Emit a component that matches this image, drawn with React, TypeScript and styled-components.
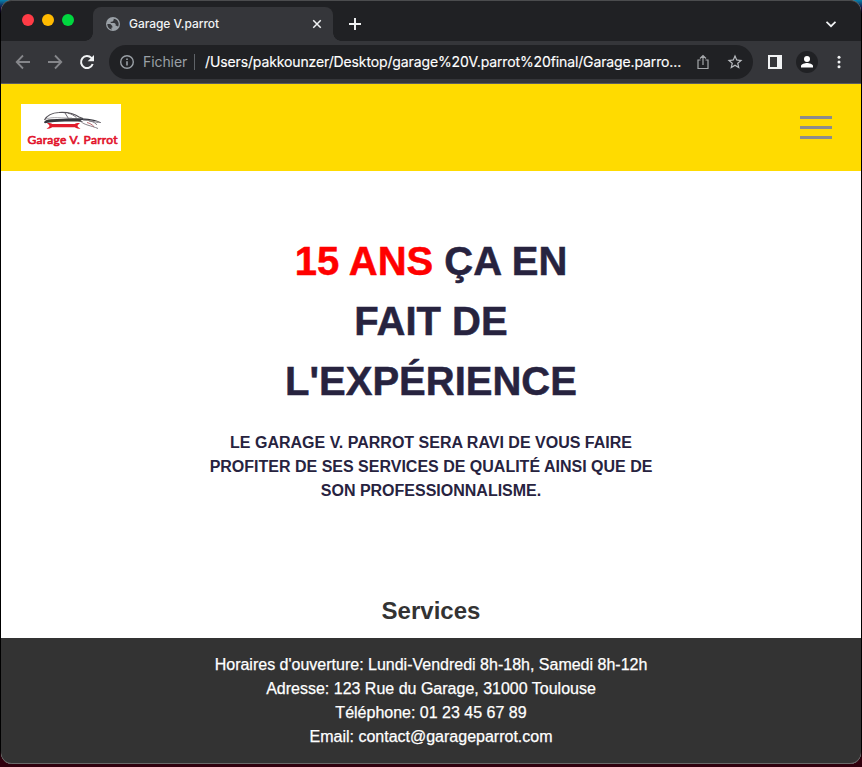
import React from "react";
import styled, { createGlobalStyle } from "styled-components";

const GlobalStyle = createGlobalStyle`
  *, *::before, *::after { box-sizing: border-box; }
  html, body { margin: 0; padding: 0; background: #000; }
  body { overflow: hidden; }
  svg { display: block; flex: none; }
`;

const Desktop = styled.div`
  width: 862px;
  height: 767px;
  padding: 0 1px 3px;
  background: linear-gradient(#0782ad 0, #160a3d 8px, #000 14px, #000 750px, #30000d 760px);
`;

const Window = styled.div`
  position: relative;
  height: 764px;
  display: flex;
  flex-direction: column;
  overflow: hidden;
  border-radius: 11px;
  background: #fff;
  font-family: "Liberation Sans", Arial, sans-serif;
`;

const WindowEdge = styled.div`
  position: absolute;
  inset: 0;
  border-radius: 11px;
  pointer-events: none;
  box-shadow: inset 0 -1px 0 #6a6a6a, inset 0 1px 0 #4b4c4e;
`;

const TabStrip = styled.div`
  height: 41px;
  flex: none;
  display: flex;
  align-items: flex-end;
  background: #202124;
  color: #fff;
`;

const Lights = styled.div`
  width: 92px;
  height: 41px;
  padding: 14px 0 0 21px;
  display: flex;
  gap: 8px;
`;

const Light = styled.span<{ $color: string }>`
  width: 12px;
  height: 12px;
  border-radius: 50%;
  background: ${(p) => p.$color};
`;

const Tab = styled.div`
  position: relative;
  width: 240px;
  height: 34px;
  padding: 0 11px 0 12px;
  display: flex;
  align-items: center;
  border-radius: 8px 8px 0 0;
  background: #35363a;

  &::before, &::after {
    content: "";
    position: absolute;
    bottom: 0;
    width: 8px;
    height: 8px;
  }
  &::before {
    left: -8px;
    background: radial-gradient(circle at 0 0, transparent 7.5px, #35363a 8px);
  }
  &::after {
    right: -8px;
    background: radial-gradient(circle at 100% 0, transparent 7.5px, #35363a 8px);
  }
`;

const TabTitle = styled.span`
  flex: 1;
  margin-left: 8px;
  font: 500 12px/16px Inter, sans-serif;
  letter-spacing: -0.05px;
  color: #f1f3f4;
`;

const NewTab = styled.div`
  flex: 1;
  height: 34px;
  padding-left: 16px;
  display: flex;
  align-items: center;
`;

const TabSearch = styled.div`
  height: 34px;
  padding-right: 25px;
  display: flex;
  align-items: center;
`;

const Toolbar = styled.div`
  height: 43px;
  flex: none;
  display: flex;
  align-items: center;
  padding: 0 13px 0 14px;
  background: #35363a;
  border-bottom: 1px solid #5c5d61;
`;

const NavIcons = styled.div`
  display: flex;
  gap: 16px;
  width: 94px;
`;

const AddressBar = styled.div`
  width: 644px;
  height: 34px;
  padding: 0 9px 0 10px;
  display: flex;
  align-items: center;
  border-radius: 17px;
  background: #202124;
  font: 400 14px/20px Inter, sans-serif;
`;

const Scheme = styled.span`
  width: 52px;
  margin-left: 8px;
  border-right: 1px solid #5f6368;
  line-height: 16px;
  letter-spacing: -0.08px;
  color: #9aa0a6;
`;

const Url = styled.span`
  flex: 1;
  margin-left: 10px;
  white-space: nowrap;
  letter-spacing: -0.125px;
  color: #fff;
  -webkit-text-stroke: 0.15px #fff;
`;

const BarActions = styled.div`
  display: flex;
  align-items: center;
  gap: 15px;
`;

const Tools = styled.div`
  display: flex;
  align-items: center;
  margin-left: 15px;
`;

const Avatar = styled.div`
  width: 22px;
  height: 22px;
  margin: 0 13px 0 14px;
  display: flex;
  align-items: center;
  justify-content: center;
  border-radius: 50%;
  background: #202124;
`;

const Header = styled.header`
  height: 87px;
  flex: none;
  padding: 0 29px 0 20px;
  display: flex;
  align-items: center;
  justify-content: space-between;
  background: #ffdb00;
`;

const Burger = styled.div`
  display: flex;
  flex-direction: column;
  gap: 7px;
  width: 32px;
`;

const BurgerLine = styled.span`
  height: 3px;
  background: #8c8c8c;
`;

const Main = styled.main`
  flex: 1;
  min-height: 0;
  padding-top: 60px;
  display: flex;
  flex-direction: column;
  align-items: center;
  text-align: center;
`;

const Title = styled.h1`
  margin: 0;
  font-size: 40px;
  line-height: 60px;
  font-weight: 700;
  color: #27233f;
  -webkit-text-stroke: 0.5px;
`;

const Line = styled.span`
  display: block;
  white-space: nowrap;
`;

const Accent = styled.span`
  color: #f00;
`;

const Lead = styled.p`
  margin: 20px 0 0;
  font-size: 16px;
  line-height: 24px;
  font-weight: 700;
  color: #27233f;
`;

const SectionTitle = styled.h2`
  margin: 90px 0 0;
  font-size: 24px;
  line-height: 36px;
  font-weight: 700;
  color: #333;
`;

const Footer = styled.footer`
  height: 126px;
  flex: none;
  padding-top: 15px;
  background: #333;
  color: #fff;
  text-align: center;
  font-size: 16px;
  line-height: 24px;
  -webkit-text-stroke: 0.25px #fff;
`;

const Globe = () => (
  <svg width="16" height="16" viewBox="0 0 24 24">
    <path fill="#9aa0a6" d="M12 1.500a10.500 10.500 0 1 0 0 21 10.500 10.500 0 0 0 0-21zm-1.500 18.800a8.500 8.500 0 0 1-7-8.300H8l3 3v2.500h-2zM19.500 16c-.5-1-1.500-1.500-2.500-1.500h-1V12l-2-1.500H8.500V8.500h2.500l2-2V4c4 .3 7.500 3.500 7.500 8 0 1.500-.3 2.800-1 4z" />
  </svg>
);

const Stroke = ({ d, size = 16, color = "#f1f3f4", w = 2 }: { d: string; size?: number; color?: string; w?: number }) => (
  <svg width={size} height={size} viewBox="0 0 16 16" fill="none" stroke={color} strokeWidth={w}>
    <path d={d} />
  </svg>
);

const Reload = () => (
  <svg width="16" height="16" viewBox="0 0 16 16" fill="none" stroke="#f1f3f4" strokeWidth="2">
    <path d="M13.700 10A6 6 0 1 1 12.400 3.900L14 5.500" />
    <path d="M15 1v6.300H8.700z" fill="#f1f3f4" stroke="none" />
  </svg>
);

const Info = () => (
  <svg width="16" height="16" viewBox="0 0 16 16" fill="none" stroke="#9aa0a6" strokeWidth="1.400">
    <circle cx="8" cy="8" r="6.300" />
    <path d="M8 7.200v4.300M8 4.400v1.600" strokeWidth="1.600" />
  </svg>
);

const Star = () => (
  <svg width="18" height="18" viewBox="0 0 24 24" fill="#b9bcc0">
    <path d="M22 9.240l-7.190-.62L12 2 9.190 8.630 2 9.240l5.460 4.730L5.820 21 12 17.270 18.180 21l-1.630-7.030L22 9.240zM12 15.400l-3.760 2.270 1-4.280-3.320-2.880 4.380-.38L12 6.100l1.710 4.040 4.380.38-3.320 2.880 1 4.280L12 15.400z" />
  </svg>
);

const SidePanel = () => (
  <svg width="14" height="14" viewBox="0 0 14 14">
    <path fill="#f1f3f4" fillRule="evenodd" d="M0 0h14v14H0zM2 2v10h7V2z" />
  </svg>
);

const Person = () => (
  <svg width="14" height="14" viewBox="0 0 14 14" fill="#fff">
    <circle cx="7" cy="4" r="3" />
    <path d="M1 12.500v-1.500C1 9 5 8 7 8s6 1 6 3v1.500z" />
  </svg>
);

const Kebab = () => (
  <svg width="16" height="16" viewBox="0 0 16 16" fill="#f1f3f4">
    <circle cx="8" cy="3.200" r="1.500" />
    <circle cx="8" cy="8" r="1.500" />
    <circle cx="8" cy="12.800" r="1.500" />
  </svg>
);

const Logo = () => (
  <svg width="100" height="47" viewBox="0 0 100 47">
    <path fill="#fff" d="M0 0h100v47H0z" />
    <path d="M23.500 16C26 11.500 30 8.800 38 8.500c10-.6 15 1 20 4.500l4 1.500" fill="none" stroke="#555259" strokeWidth="1.200" />
    <path d="M44 9l3.500 5.500M47 9.200c4 .8 6 2.300 8.500 4.500" fill="none" stroke="#68636b" strokeWidth="1" />
    <path fill="#37373d" d="M23 18.500c.3-2 3-3 7-3.200 9-.3 18-1.200 27-1 9 .2 18 1 22.500 4-7-1.600-14-2.300-20-2.200l2.500 1.800c-6-.6-13-.5-18-.3-8 .2-14 .8-20 1.700z" />
    <path d="M24 15.500C31 12 42 14.500 51 14" fill="none" stroke="#8a858d" strokeWidth=".7" />
    <path d="M60 17.500c3 3.500 10 4 17 7M68 17c5 .3 9 2 12 1.500M62 16c6 0 11 1.500 14 4.800" fill="none" stroke="#77737a" strokeWidth=".9" />
    <path d="M66 18.500c3 .8 5 2 7 4.200" fill="none" stroke="#a7444c" strokeWidth=".8" />
    <path d="M29 21.700h27" stroke="#e21b2b" strokeWidth="3.200" />
    <path d="M26 19.200c4-.8 6 .5 5.500 2.800-.5 2-3 3.200-6 2.700l2.800-1.900v-1.700zM59 19.200c-4-.8-6 .5-5.500 2.800.5 2 3 3.200 6 2.700l-2.800-1.900v-1.700z" fill="#e21b2b" />
    <text x="6.500" y="40" textLength="90" lengthAdjust="spacing" fontFamily="Lato, sans-serif" fontWeight="400" fontSize="12" fill="#e2142b" stroke="#e2142b" strokeWidth=".65" strokeLinejoin="round">
      Garage V. Parrot
    </text>
  </svg>
);

export default function App() {
  return (
    <>
      <GlobalStyle />
      <Desktop>
        <Window>
          <TabStrip>
            <Lights>
              <Light $color="#ff3b46" />
              <Light $color="#ffba00" />
              <Light $color="#00d73f" />
            </Lights>
            <Tab>
              <Globe />
              <TabTitle>Garage V.parrot</TabTitle>
              <Stroke size={10} d="M2 2l12 12M14 2L2 14" w={2.400} />
            </Tab>
            <NewTab>
              <Stroke size={12} d="M8 0v16M0 8h16" w={2.600} />
            </NewTab>
            <TabSearch>
              <Stroke size={10} d="M.8 4.500l7.200 7 7.200-7" w={2.800} />
            </TabSearch>
          </TabStrip>
          <Toolbar>
            <NavIcons>
              <Stroke d="M15 8H2M8 1.500L1.700 8 8 14.500" color="#85868a" w={1.800} />
              <Stroke d="M1 8h13M8 1.500L14.300 8 8 14.500" color="#85868a" w={1.800} />
              <Reload />
            </NavIcons>
            <AddressBar>
              <Info />
              <Scheme>Fichier</Scheme>
              <Url>/Users/pakkounzer/Desktop/garage%20V.parrot%20final/Garage.parro...</Url>
              <BarActions>
                <Stroke d="M5.500 6H3v8.500h10V6h-2.500M8 11V2M5 4.500l3-3 3 3" color="#a5a7aa" w={1.200} />
                <Star />
              </BarActions>
            </AddressBar>
            <Tools>
              <SidePanel />
              <Avatar>
                <Person />
              </Avatar>
              <Kebab />
            </Tools>
          </Toolbar>
          <Header>
            <Logo />
            <Burger>
              <BurgerLine />
              <BurgerLine />
              <BurgerLine />
            </Burger>
          </Header>
          <Main>
            <Title>
              <Line>
                <Accent>15 ANS</Accent> ÇA EN
              </Line>
              <Line>FAIT DE</Line>
              <Line>L'EXPÉRIENCE</Line>
            </Title>
            <Lead>
              <Line>LE GARAGE V. PARROT SERA RAVI DE VOUS FAIRE</Line>
              <Line>PROFITER DE SES SERVICES DE QUALITÉ AINSI QUE DE</Line>
              <Line>SON PROFESSIONNALISME.</Line>
            </Lead>
            <SectionTitle>Services</SectionTitle>
          </Main>
          <Footer>
            <Line>Horaires d'ouverture: Lundi-Vendredi 8h-18h, Samedi 8h-12h</Line>
            <Line>Adresse: 123 Rue du Garage, 31000 Toulouse</Line>
            <Line>Téléphone: 01 23 45 67 89</Line>
            <Line>Email: contact@garageparrot.com</Line>
          </Footer>
          <WindowEdge />
        </Window>
      </Desktop>
    </>
  );
}
